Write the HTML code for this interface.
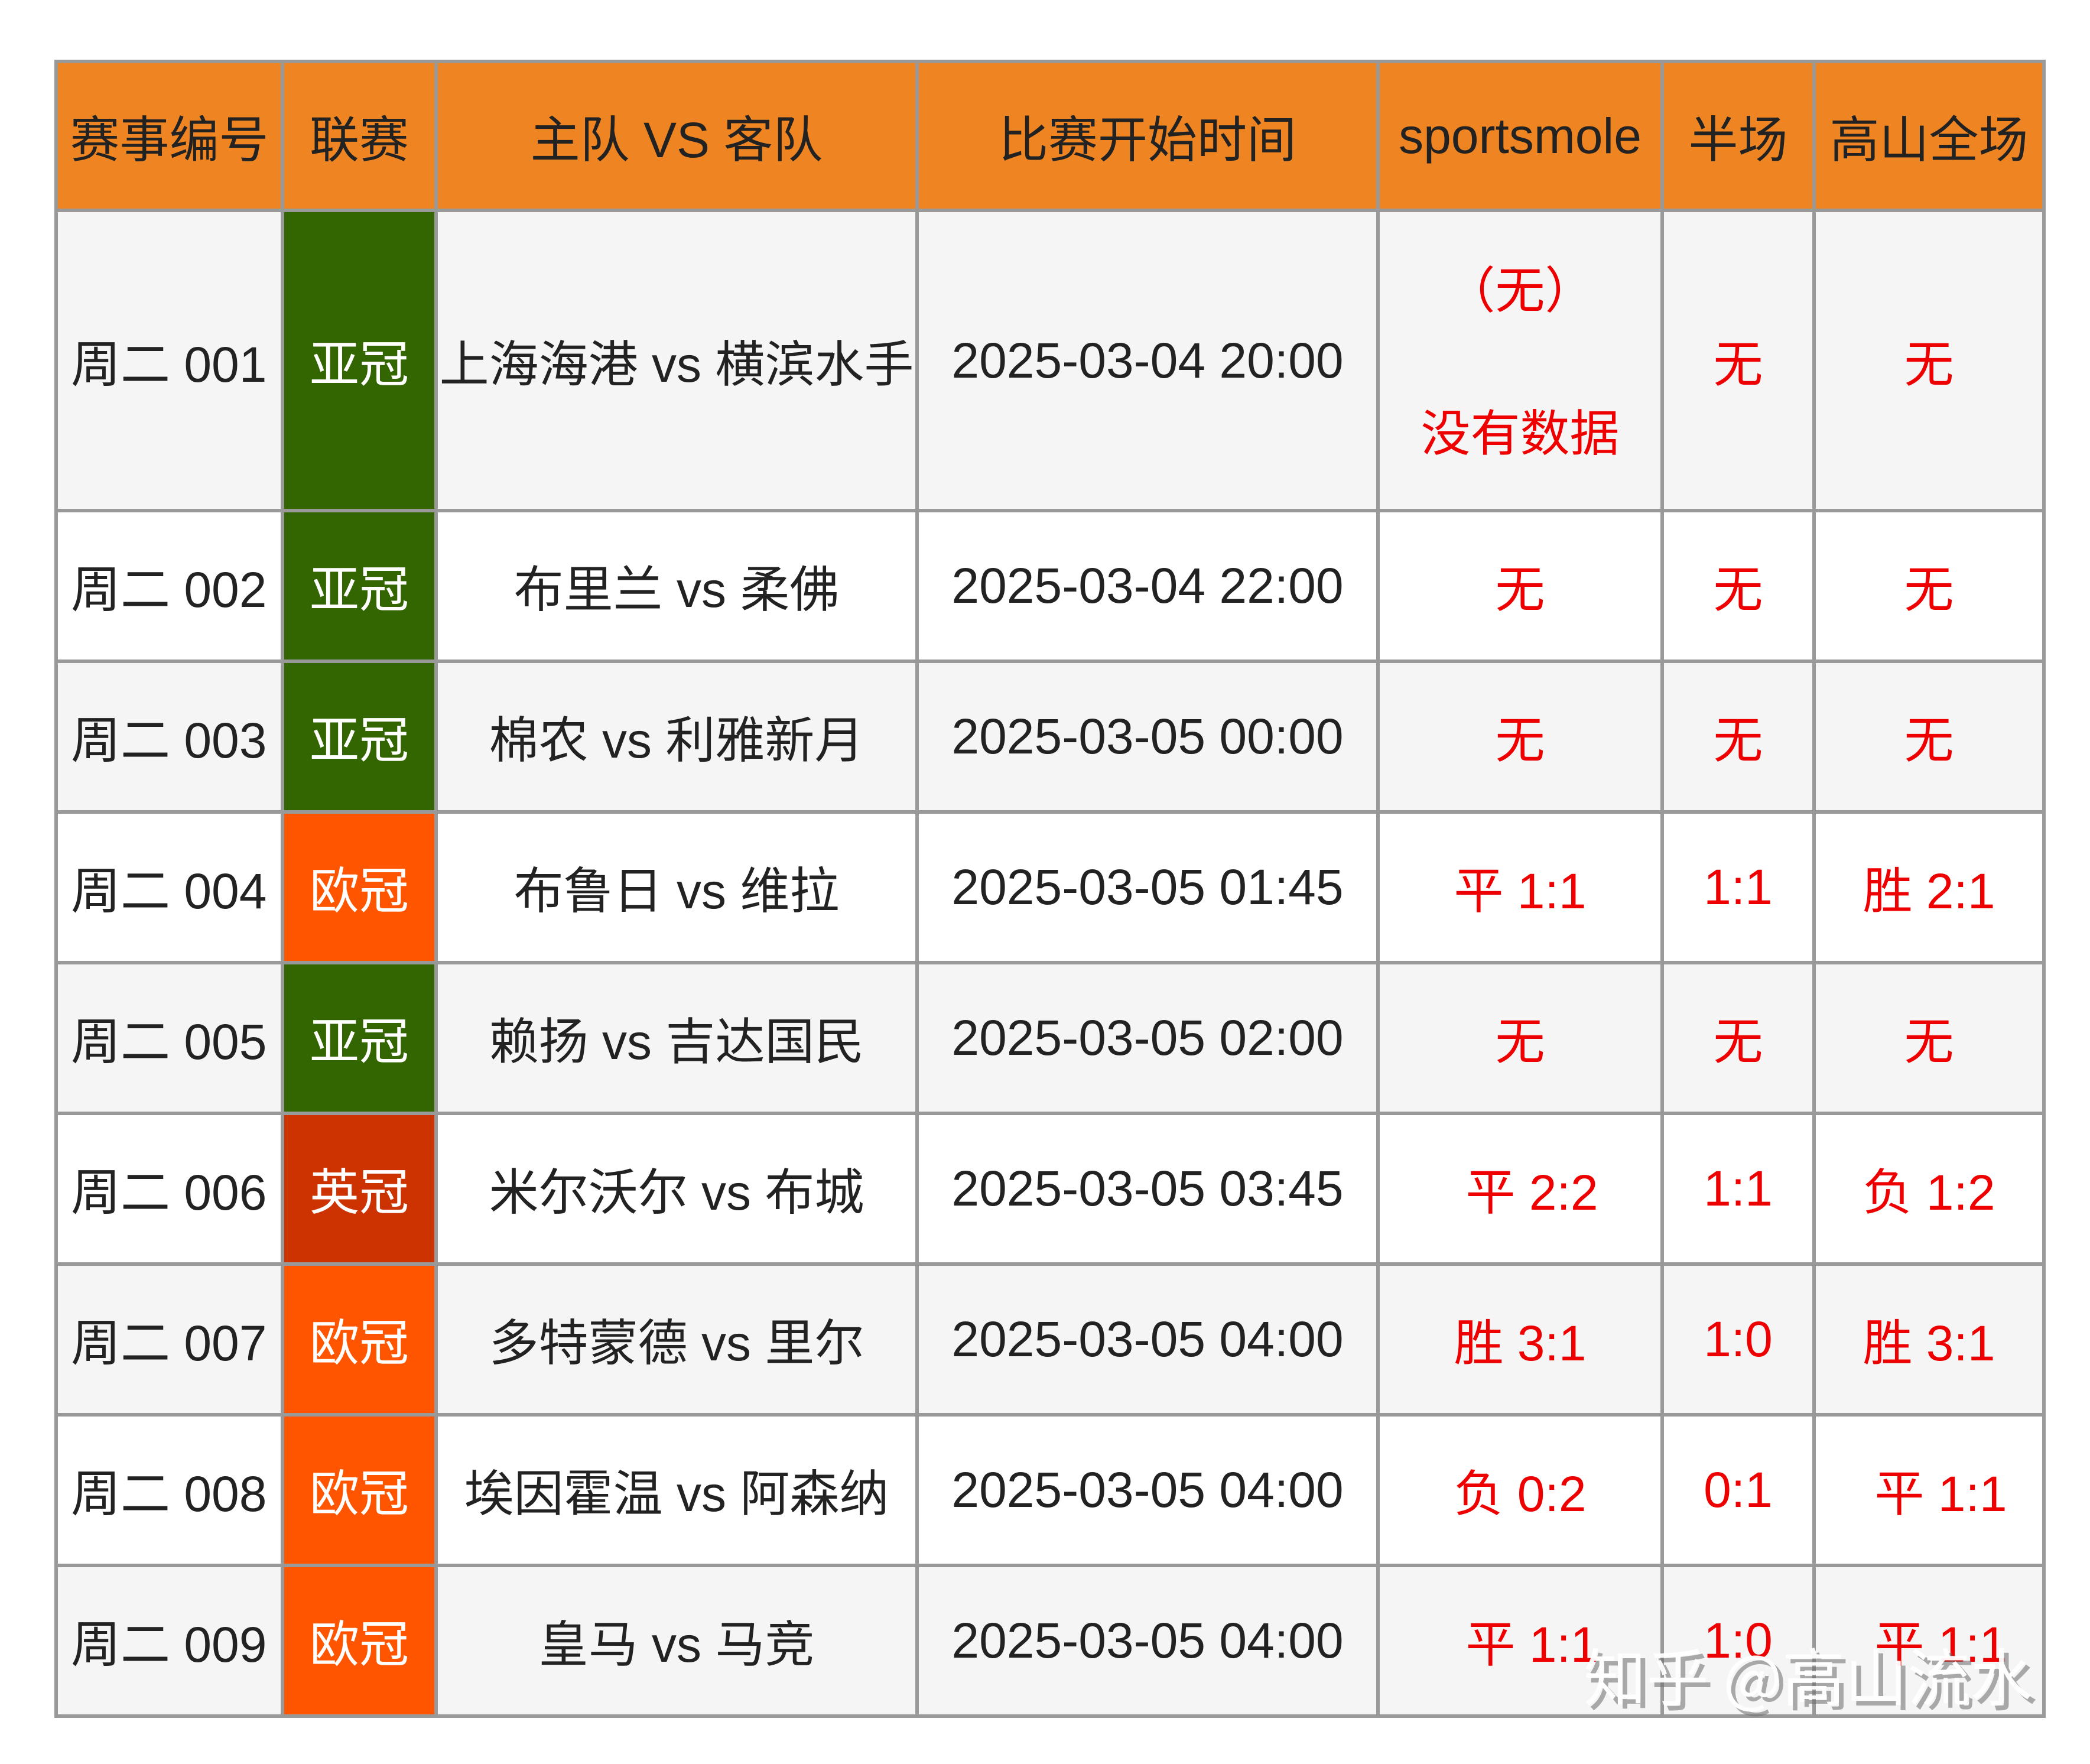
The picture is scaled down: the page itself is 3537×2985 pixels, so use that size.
<!DOCTYPE html>
<html><head><meta charset="utf-8"><style>
html,body{margin:0;padding:0;background:#fff;width:3537px;height:2985px;overflow:hidden;position:relative}
table{position:absolute;left:92px;top:101px;border-collapse:collapse;table-layout:fixed;width:3364px;
font-family:"Liberation Sans","Noto Sans CJK SC",sans-serif;font-size:84px;color:#222}
td{border:6px solid #999;text-align:center;vertical-align:middle;padding:0;white-space:nowrap;overflow:hidden}
thead td{background:#ee8522;height:246px}
tbody tr:nth-child(odd) td{background:#f5f5f5}
tbody tr:nth-child(even) td{background:#fff}
td.id{text-align:left;padding-left:22px}
td.g{background:#336600!important;color:#fff}
td.o{background:#ff5500!important;color:#fff}
td.e{background:#cc3300!important;color:#fff}
.r{color:#ee0000}
tbody tr{height:255px}
tbody tr.first{height:508px}
.wm{position:absolute;left:2680px;top:2755px;font-family:"Noto Sans CJK SC",sans-serif;font-size:106px;color:#fff;text-shadow:8px 8px 0 rgba(110,110,110,.6);white-space:nowrap;opacity:.95}
</style></head><body>
<table>
<colgroup><col style="width:383px"><col style="width:260px"><col style="width:814px"><col style="width:780px"><col style="width:481px"><col style="width:257px"><col style="width:389px"></colgroup>
<thead><tr><td>赛事编号</td><td>联赛</td><td>主队 VS 客队</td><td>比赛开始时间</td><td>sportsmole</td><td>半场</td><td>高山全场</td></tr></thead>
<tbody>
<tr class="first"><td class="r"style="display:none"></td><td class="id">周二 001</td><td class="g">亚冠</td><td>上海海港 vs 横滨水手</td><td>2025-03-04 20:00</td><td class="r"><div style="line-height:124px;margin-bottom:124px;font-family:'Noto Sans CJK SC',sans-serif">（无）</div><div style="line-height:124px">没有数据</div></td><td class="r">无</td><td class="r">无</td></tr>
<tr><td class="id">周二 002</td><td class="g">亚冠</td><td>布里兰 vs 柔佛</td><td>2025-03-04 22:00</td><td class="r">无</td><td class="r">无</td><td class="r">无</td></tr>
<tr><td class="id">周二 003</td><td class="g">亚冠</td><td>棉农 vs 利雅新月</td><td>2025-03-05 00:00</td><td class="r">无</td><td class="r">无</td><td class="r">无</td></tr>
<tr><td class="id">周二 004</td><td class="o">欧冠</td><td>布鲁日 vs 维拉</td><td>2025-03-05 01:45</td><td class="r">平 1:1</td><td class="r">1:1</td><td class="r">胜 2:1</td></tr>
<tr><td class="id">周二 005</td><td class="g">亚冠</td><td>赖扬 vs 吉达国民</td><td>2025-03-05 02:00</td><td class="r">无</td><td class="r">无</td><td class="r">无</td></tr>
<tr><td class="id">周二 006</td><td class="e">英冠</td><td>米尔沃尔 vs 布城</td><td>2025-03-05 03:45</td><td class="r" style="padding-left:40px">平 2:2</td><td class="r">1:1</td><td class="r">负 1:2</td></tr>
<tr><td class="id">周二 007</td><td class="o">欧冠</td><td>多特蒙德 vs 里尔</td><td>2025-03-05 04:00</td><td class="r">胜 3:1</td><td class="r">1:0</td><td class="r">胜 3:1</td></tr>
<tr><td class="id">周二 008</td><td class="o">欧冠</td><td>埃因霍温 vs 阿森纳</td><td>2025-03-05 04:00</td><td class="r">负 0:2</td><td class="r">0:1</td><td class="r" style="padding-left:40px">平 1:1</td></tr>
<tr><td class="id">周二 009</td><td class="o">欧冠</td><td>皇马 vs 马竞</td><td>2025-03-05 04:00</td><td class="r" style="padding-left:40px">平 1:1</td><td class="r">1:0</td><td class="r" style="padding-left:40px">平 1:1</td></tr>
</tbody></table>
<div class="wm">知乎 @高山流水</div>
</body></html>
